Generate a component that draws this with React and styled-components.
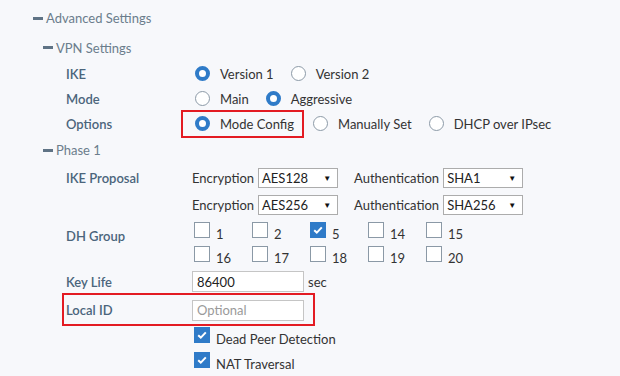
import styled, { createGlobalStyle } from 'styled-components';

const GlobalStyle = createGlobalStyle`
  html, body {
    margin: 0;
    padding: 0;
    background: #f7f8fb;
  }
  body {
    font-family: Lato, 'Open Sans', 'Liberation Sans', sans-serif;
    font-size: 13px;
    color: #333;
  }
`

const BLUE = '#2f7bc8';
const RED = '#e31b23';

const Page = styled.div`
  padding: 5px 0 0 33px;
  width: 620px;
  height: 376px;
  box-sizing: border-box;
  overflow: hidden;
`

const Toggle = styled.div`
  display: flex;
  align-items: center;
  gap: 3px;
  height: ${p => p.$h || 26}px;
  margin-top: ${p => p.$mt || 0}px;
  color: #6b7d8c;
  font-size: 13px;
`

const Dash = styled.span`
  display: inline-block;
  width: 10px;
  height: 3px;
  background: #5f7385;
`

const Body = styled.div`
  padding-left: 10px;
`

const Fields = styled.div`
  padding-left: 23px;
`

const Row = styled.div`
  display: grid;
  grid-template-columns: 126px 1fr;
  align-items: ${p => p.$top ? 'start' : 'center'};
  height: ${p => p.$h}px;
`

const Label = styled.div`
  color: #4b657c;
  font-weight: 600;
  width: ${p => p.$w ? `${p.$w}px` : 'auto'};
  padding-top: ${p => p.$pt || 0}px;
`

const Control = styled.div`
  display: flex;
  align-items: center;
  color: #333;
  padding-left: ${p => p.$pl || 0}px;
`

const RadioGroup = styled.div`
  display: flex;
  align-items: center;
  gap: 17px;
  padding-left: 3px;
`

const RadioItem = styled.label`
  display: inline-flex;
  align-items: center;
  gap: 10px;
`

const Circle = styled.span`
  width: 15px;
  height: 15px;
  box-sizing: border-box;
  border-radius: 50%;
  background: #fff;
  border: ${p => p.$on ? `4px solid ${BLUE}` : '1px solid #8c9aa7'};
`

const Highlight = styled.div`
  display: flex;
  align-items: center;
  width: fit-content;
  border: 2px solid ${RED};
  padding: ${p => p.$pad};
  margin: -6px ${p => p.$mr || 0}px -6px ${p => p.$ml || 0}px;
  grid-column: ${p => p.$span ? '1 / 3' : 'auto'};
`

const Select = styled.div`
  display: flex;
  align-items: center;
  justify-content: space-between;
  box-sizing: border-box;
  width: 80px;
  height: 20px;
  padding: 0 6px 0 3px;
  background: #fff;
  border: 1px solid #acacac;
  color: #222;
  margin-left: 4px;
  margin-right: ${p => p.$mr || 0}px;
`

const Arrow = styled.span`
  font-size: 8px;
  color: #111;
`

const CheckGrid = styled.div`
  display: grid;
  grid-template-columns: repeat(5, 58px);
  grid-auto-rows: 24px;
  align-items: center;
  padding-left: 2px;
`

const CheckItem = styled.label`
  display: inline-flex;
  align-items: flex-end;
  gap: 6px;
  line-height: 13px;
`

const Box = styled.span`
  display: inline-flex;
  align-items: center;
  justify-content: center;
  width: 16px;
  height: 16px;
  box-sizing: border-box;
  background: ${p => p.$on ? BLUE : '#fff'};
  border: 1px solid ${p => p.$on ? BLUE : '#8b99a6'};
`

const Num = styled.span`
  margin-bottom: -3px;
`

const Input = styled.div`
  box-sizing: border-box;
  width: 112px;
  height: 21px;
  padding: 0 4px;
  display: flex;
  align-items: center;
  background: #fff;
  border: 1px solid #c5c5c5;
  color: ${p => p.$placeholder ? '#9a9a9a' : '#222'};
`

const Unit = styled.span`
  margin-left: 4px;
`

const Tick = () => (
  <svg width="12" height="12" viewBox="0 0 12 12">
    <path d="M2.2 6.2 L4.8 8.6 L9.8 3.4" fill="none" stroke="#fff" strokeWidth="2" />
  </svg>
)

const Radio = ({ on, children }) => (
  <RadioItem>
    <Circle $on={on} />
    <span>{children}</span>
  </RadioItem>
)

const Check = ({ on, children }) => (
  <CheckItem>
    <Box $on={on}>{on && <Tick />}</Box>
    <Num>{children}</Num>
  </CheckItem>
)

const dhGroups = [1, 2, 5, 14, 15, 16, 17, 18, 19, 20];

export default function App() {
  return (
    <Page>
      <GlobalStyle />
      <Toggle><Dash />Advanced Settings</Toggle>
      <Body>
        <Toggle $mt={3} $h={27}><Dash />VPN Settings</Toggle>
        <Fields>
          <Row $h={25}>
            <Label>IKE</Label>
            <Control>
              <RadioGroup>
                <Radio on>Version 1</Radio>
                <Radio>Version 2</Radio>
              </RadioGroup>
            </Control>
          </Row>
          <Row $h={25}>
            <Label>Mode</Label>
            <Control>
              <RadioGroup>
                <Radio>Main</Radio>
                <Radio on>Aggressive</Radio>
              </RadioGroup>
            </Control>
          </Row>
          <Row $h={25}>
            <Label>Options</Label>
            <Control>
              <RadioGroup>
                <Highlight $ml={-14} $mr={-8} $pad="4px 8px 4px 12px">
                  <Radio on>Mode Config</Radio>
                </Highlight>
                <Radio>Manually Set</Radio>
                <Radio>DHCP over IPsec</Radio>
              </RadioGroup>
            </Control>
          </Row>
        </Fields>
        <Toggle $h={28}><Dash />Phase 1</Toggle>
        <Fields>
          <Row $h={27}>
            <Label>IKE Proposal</Label>
            <Control>
              Encryption<Select $mr={16}>AES128<Arrow>▼</Arrow></Select>
              Authentication<Select>SHA1<Arrow>▼</Arrow></Select>
            </Control>
          </Row>
          <Row $h={27}>
            <div />
            <Control>
              Encryption<Select $mr={16}>AES256<Arrow>▼</Arrow></Select>
              Authentication<Select>SHA256<Arrow>▼</Arrow></Select>
            </Control>
          </Row>
          <Row $h={49} $top>
            <Label $pt={10}>DH Group</Label>
            <CheckGrid>
              {dhGroups.map(n => <Check key={n} on={n === 5}>{n}</Check>)}
            </CheckGrid>
          </Row>
          <Row $h={29}>
            <Label>Key Life</Label>
            <Control>
              <Input>86400</Input>
              <Unit>sec</Unit>
            </Control>
          </Row>
          <Row $h={26}>
            <Highlight $span $ml={-4} $pad="5px 9px 3px 2px">
              <Label $w={126}>Local ID</Label>
              <Input $placeholder>Optional</Input>
            </Highlight>
          </Row>
          <Row $h={26}>
            <div />
            <Control $pl={2}>
              <Check on>Dead Peer Detection</Check>
            </Control>
          </Row>
          <Row $h={24}>
            <div />
            <Control $pl={2}>
              <Check on>NAT Traversal</Check>
            </Control>
          </Row>
        </Fields>
      </Body>
    </Page>
  )
}
